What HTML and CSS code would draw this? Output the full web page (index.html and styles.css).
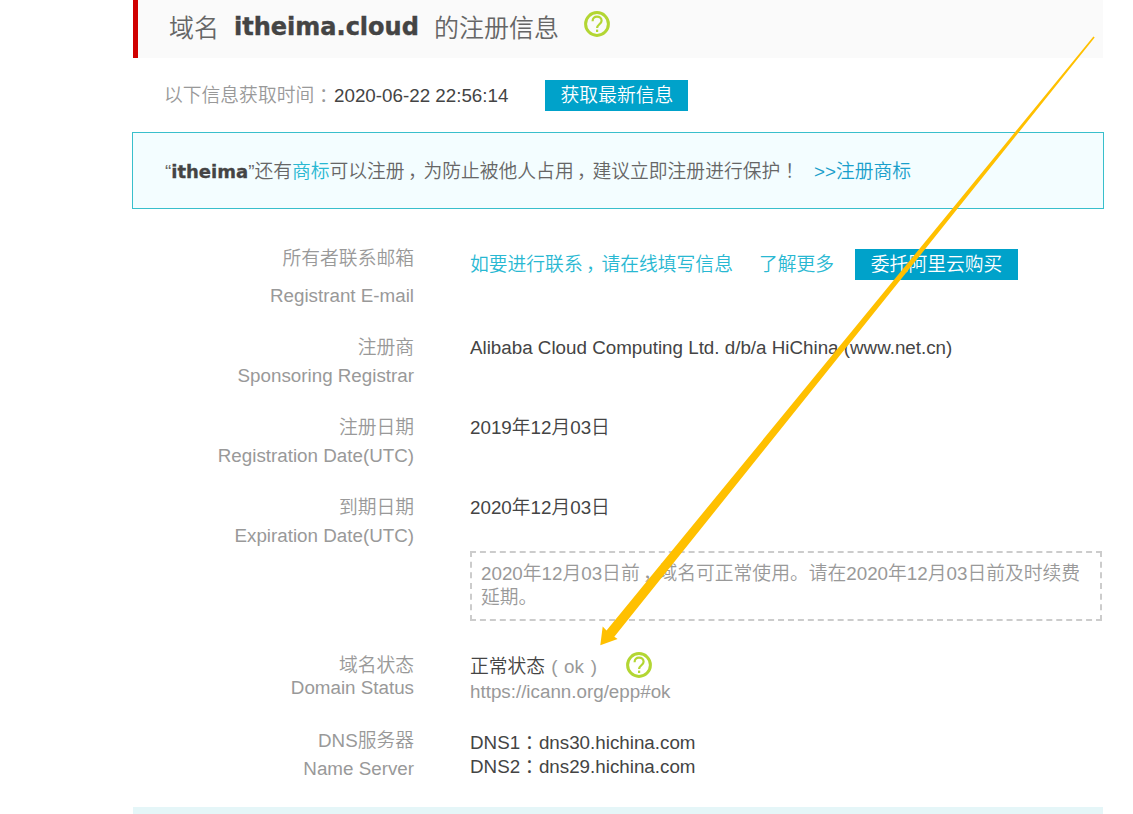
FILE: index.html
```html
<!DOCTYPE html>
<html lang="zh-CN">
<head>
<meta charset="utf-8">
<title>域名注册信息</title>
<link rel="stylesheet" href="styles.css">
</head>
<body>
<main class="page">
  <header class="title">
    <span>域名</span>
    <strong class="title-domain">itheima.cloud</strong>
    <span>的注册信息</span>
    <svg class="help title-help" viewBox="0 0 26 26"><circle cx="13" cy="13" r="11.4"/><path d="M8.6 10.2C8.6 7 10.5 5.6 13 5.6s4.6 1.5 4.6 4.1c0 3.3-4.5 3.8-4.5 7.3"/><path d="M13.1 18.6v2.4"/></svg>
  </header>

  <div class="fetched">
    <span class="muted">以下信息获取时间<span class="mark">：</span></span>
    <span class="time">2020-06-22 22:56:14</span>
    <a class="button refresh">获取最新信息</a>
  </div>

  <div class="notice">
    <span>“<strong class="notice-name">itheima</strong>”还有<a class="link">商标</a>可以注册<span class="mark comma">，</span>为防止被他人占用<span class="mark comma">，</span>建议立即注册进行保护<span class="mark">！</span></span>
    <a class="register">&gt;&gt;注册商标</a>
  </div>

  <section class="details">
    <div class="row row-email">
      <div class="label"><span>所有者联系邮箱</span><span>Registrant E-mail</span></div>
      <div class="value contact">
        <a class="link">如要进行联系<span class="mark comma">，</span>请在线填写信息</a>
        <a class="link more">了解更多</a>
        <a class="button buy">委托阿里云购买</a>
      </div>
    </div>
    <div class="row">
      <div class="label"><span>注册商</span><span>Sponsoring Registrar</span></div>
      <div class="value">Alibaba Cloud Computing Ltd. d/b/a HiChina (www.net.cn)</div>
    </div>
    <div class="row">
      <div class="label"><span>注册日期</span><span>Registration Date(UTC)</span></div>
      <div class="value">2019年12月03日</div>
    </div>
    <div class="row row-expiry">
      <div class="label"><span>到期日期</span><span>Expiration Date(UTC)</span></div>
      <div class="value">2020年12月03日
        <p class="tip">2020年12月03日前<span class="mark comma">，</span>域名可正常使用。请在2020年12月03日前及时续费延期。</p>
      </div>
    </div>
    <div class="row row-status">
      <div class="label"><span>域名状态</span><span>Domain Status</span></div>
      <div class="value">
        <div class="status"><span>正常状态</span><span class="muted code">( ok )</span>
          <svg class="help status-help" viewBox="0 0 26 26"><circle cx="13" cy="13" r="11.4"/><path d="M8.6 10.2C8.6 7 10.5 5.6 13 5.6s4.6 1.5 4.6 4.1c0 3.3-4.5 3.8-4.5 7.3"/><path d="M13.1 18.6v2.4"/></svg>
        </div>
        <div class="muted">https://icann.org/epp#ok</div>
      </div>
    </div>
    <div class="row row-dns">
      <div class="label"><span>DNS服务器</span><span>Name Server</span></div>
      <div class="value"><div>DNS1<span class="mark">：</span>dns30.hichina.com</div><div>DNS2<span class="mark">：</span>dns29.hichina.com</div></div>
    </div>
  </section>
  <div class="next-section"></div>
  <svg class="arrow" viewBox="0 0 1133 814"><path d="M1093.4 36.6L606.5 630.5L602.7 626.5L600.3 645.3L617.6 639L614.3 636.8L1094.7 37.6Z"/></svg>
</main>
</body>
</html>
```
FILE: styles.css
```css
* { box-sizing: border-box; }
body {
  margin: 0;
  background: #fff;
  color: #444;
  font: 350 18.8px/24px "Liberation Sans", "Noto Sans CJK SC", sans-serif;
}
.page {
  position: relative;
  width: 1133px;
  height: 814px;
  padding-left: 132px;
  overflow: hidden;
  display: flex;
  flex-direction: column;
}
.title {
  display: flex;
  width: 970px;
  height: 58px;
  margin-left: 1px;
  padding-left: 31px;
  border-left: 5px solid #d00000;
  background: #fafafa;
  color: #666;
  font-size: 25px;
  line-height: 56px;
  white-space: nowrap;
}
.title-domain {
  width: 186px;
  margin: 0 14px 0 15px;
  color: #444;
  font: bold 24px/55px "DejaVu Sans", sans-serif;
  -webkit-text-stroke: 0.4px #444;
}
.help { width: 26px; height: 26px; fill: none; stroke: #b3d633; stroke-width: 3; flex: none; }
.help path { stroke-width: 2.2; }
.title-help { margin: 11px 0 0 25px; }
.fetched {
  display: flex;
  align-items: center;
  height: 31px;
  margin-top: 22px;
  padding-left: 32px;
  white-space: nowrap;
}
.muted { color: #999; }
.mark { padding: 0 0.25em; font-family: "Noto Sans CJK SC", sans-serif; font-feature-settings: "halt"; line-height: 1; }
.comma { padding: 0 0.32em 0 0.18em; }
.button { height: 31px; background: #00a2ca; color: #fff; line-height: 31px; text-align: center; }
.time { margin-left: 1px; }
.refresh { width: 143px; margin-left: 37px; }
.notice {
  display: flex;
  width: 972px;
  height: 77px;
  margin-top: 21px;
  padding-left: 32px;
  border: 1px solid #38bfcc;
  background: #f3fdff;
  color: #666;
  line-height: 77px;
  white-space: nowrap;
}
.notice-name { font: bold 18px/1 "DejaVu Sans", sans-serif; color: #444; -webkit-text-stroke: 0.3px #444; }
.link { color: #29b8d2; }
.register { margin-left: 15px; color: #1a9fcb; }
.details { padding-top: 30px; }
.row {
  display: grid;
  grid-template-columns: 282px 632px;
  column-gap: 56px;
  height: 80px;
  white-space: nowrap;
}
.label { display: flex; flex-direction: column; padding-top: 1px; text-align: right; color: #999; line-height: 28px; }
.value { line-height: 30px; }
.row-email { height: 94px; }
.row-email .label { line-height: 37px; }
.contact { display: flex; padding-top: 10px; line-height: 31px; }
.more { margin-left: 26px; }
.buy { width: 163px; margin-left: 21px; }
.row-expiry { height: 161px; }
.tip {
  height: 70px;
  margin: 28px 0 0;
  padding: 9px 8px 0 9px;
  border: 2px dashed #ccc;
  color: #999;
  line-height: 24px;
  white-space: normal;
}
.row-status { height: 73px; }
.row-status .label { line-height: 22px; }
.row-status .value { line-height: 26px; }
.status { display: flex; height: 25px; }
.code { margin-left: 6px; word-spacing: 1.5px; }
.status-help { margin-left: 29px; margin-top: -2px; }
.row-dns .label { padding-top: 0; }
.row-dns .value { padding-top: 4px; line-height: 24px; }
.next-section { position: absolute; left: 133px; bottom: 0; width: 970px; height: 7px; background: #e5f6f8; }
.arrow { position: absolute; inset: 0; width: 1133px; height: 814px; fill: #ffc000; pointer-events: none; }
```
